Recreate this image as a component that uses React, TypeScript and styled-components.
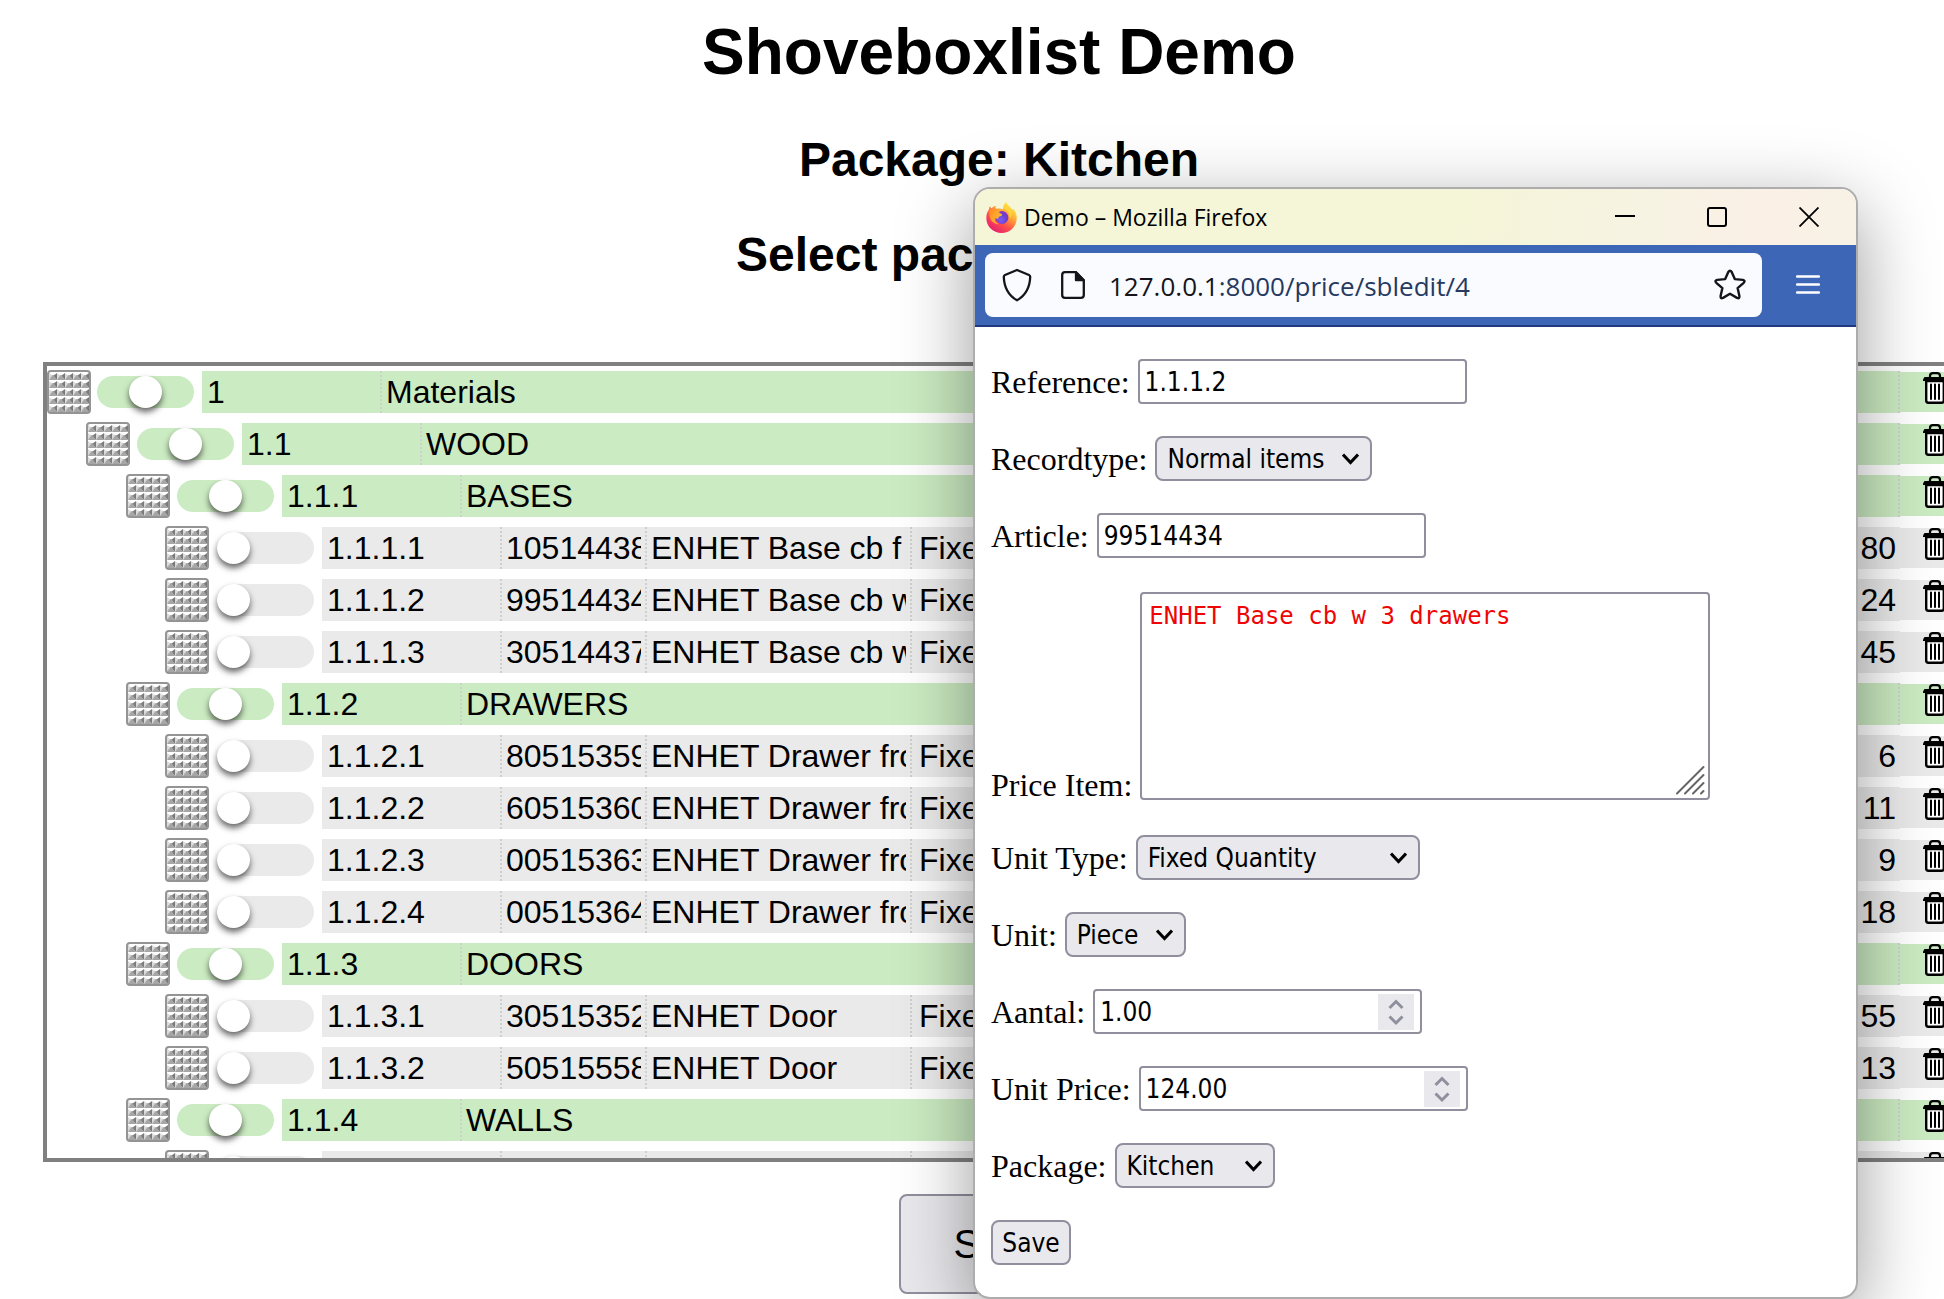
import React, { useId } from "react";
import styled, { createGlobalStyle } from "styled-components";

const sans = `"Liberation Sans", Arial, sans-serif`;
const serif = `"Liberation Serif", "Times New Roman", serif`;
const control = `"DejaVu Sans Condensed", Tahoma, sans-serif`;
const chrome = `"Open Sans", "Segoe UI", sans-serif`;

const GlobalStyle = createGlobalStyle`
  *, *::before, *::after { box-sizing: border-box; }
  body { margin: 0; background: #fff; color: #000; }
`;

/* ---------- page ---------- */

const Page = styled.div`
  position: relative;
  min-height: 100vh;
  overflow: hidden;
  font-family: ${sans};
`;

const Main = styled.main`
  display: flex;
  flex-direction: column;
  align-items: center;
  margin: 0 -11px 0 43px;
  padding-top: 15px;
`;

const Title = styled.h1`
  margin: 0 0 43px;
  font-size: 64px;
  line-height: 74px;
`;

const Heading = styled.h2`
  display: flex;
  align-items: center;
  gap: 13px;
  margin: 0 0 39px;
  font-size: 48px;
  line-height: 56px;
`;

const PackageSelect = styled.select`
  width: 150px;
  height: 44px;
  border: 2px solid #8f8f9d;
  border-radius: 8px;
  background: #e9e9ed;
  font: 26px ${control};
`;

const Frame = styled.ul`
  align-self: stretch;
  display: flex;
  flex-direction: column;
  gap: 8px;
  height: 800px;
  margin: 40px 0 32px;
  padding: 4px 0 0;
  border: 4px solid #808080;
  overflow: hidden;
  list-style: none;
`;

const PageButton = styled.button`
  width: 200px;
  height: 100px;
  border: 2px solid #8f8f9d;
  border-radius: 8px;
  background: #e9e9ed;
  color: #000;
  font: 40px ${sans};
`;

/* ---------- list rows ---------- */

const GREEN = "#cbebc2";
const GREY = "#eaeaea";

const RowItem = styled.li`
  flex: none;
  display: flex;
  align-items: center;
  height: 44px;
`;

const HandleSlot = styled.div<{ $level: number }>`
  flex: none;
  width: ${(p) => 50 + p.$level * 40}px;
  padding-left: ${(p) => Math.floor(p.$level * 39.5)}px;
  height: 44px;
`;

const Slider = styled.input<{ $group: boolean }>`
  appearance: none;
  flex: none;
  width: 97px;
  height: 32px;
  margin: 0 8px 0 0;
  border-radius: 16px;
  background: ${(p) => (p.$group ? GREEN : GREY)};
  &::-webkit-slider-thumb {
    appearance: none;
    width: 33px;
    height: 32px;
    border-radius: 50%;
    background: #fff;
    box-shadow: 0 4px 6px rgba(0, 0, 0, 0.6);
  }
`;

const Bar = styled.div<{ $group: boolean }>`
  flex: 1;
  min-width: 0;
  display: flex;
  height: 42px;
  background: ${(p) => (p.$group ? GREEN : GREY)};
  font-size: 32px;
  line-height: 42px;
`;

const Cell = styled.div<{ $width?: number; $inset?: number; $right?: boolean; $plain?: boolean }>`
  flex: ${(p) => (p.$width ? `0 0 ${p.$width}px` : "1 1 0")};
  min-width: 0;
  padding: 0 4px 0 ${(p) => p.$inset ?? 4}px;
  border-right: ${(p) => (p.$plain ? "0" : "2px dotted #cdd0cd")};
  text-align: ${(p) => (p.$right ? "right" : "left")};
`;

const Clip = styled.span`
  display: block;
  overflow: hidden;
  white-space: nowrap;
`;

const DeleteCell = styled.div<{ $group: boolean }>`
  flex: none;
  display: flex;
  width: 51px;
  height: 40px;
  padding-left: 23px;
  background: ${(p) => (p.$group ? GREEN : GREY)};
`;

const IconButton = styled.button`
  display: flex;
  align-items: center;
  justify-content: center;
  margin: 0;
  padding: 0;
  border: 0;
  background: none;
  color: inherit;
`;

const DeleteButton = styled(IconButton)`
  align-self: flex-start;
`;

/* ---------- popup window ---------- */

const Popup = styled.section`
  position: absolute;
  top: 187px;
  right: 86px;
  width: 885px;
  border: 2px solid #adadad;
  border-radius: 17px;
  background: #fff;
  background-clip: padding-box;
  box-shadow: 0 22px 76px rgba(0, 0, 0, 0.4);
  overflow: hidden;
`;

const TitleBar = styled.header`
  display: flex;
  align-items: center;
  gap: 7px;
  height: 56px;
  padding: 0 37px 0 11px;
  background: linear-gradient(100deg, #f5f5d8 0%, #f5f5d8 55%, #f6f3e2 75%, #fbf0e6 90%, #f7f2e6 100%);
  font: 23px ${chrome};
`;

const TitleText = styled.span`
  flex: 1;
`;

const WindowButtons = styled.div`
  display: flex;
  gap: 72px;
`;

const ToolBar = styled.div`
  display: flex;
  align-items: center;
  height: 82px;
  padding: 0 36px 0 10px;
  border-bottom: 2px solid #1d3b7c;
  background: #3e66b6;
  color: #fff;
`;

const UrlField = styled.div`
  flex: 1;
  display: flex;
  align-items: center;
  height: 64px;
  margin-right: 34px;
  padding: 0 15px 0 16px;
  border-radius: 8px;
  background: #f9fbff;
  color: #15141a;
`;

const UrlText = styled.div`
  flex: 1;
  padding: 2px 0 0 24px;
  color: #26395f;
  font: 26px ${chrome};
`;

const Host = styled.span`
  color: #15141a;
`;

const DocSlot = styled(IconButton)`
  margin-left: 28px;
`;

const Form = styled.form`
  display: flex;
  flex-direction: column;
  gap: 32px;
  padding: 32px 16px;
  font: 32px/36px ${serif};
`;

const Field = styled.div<{ $tall?: boolean }>`
  display: flex;
  align-items: ${(p) => (p.$tall ? "flex-end" : "center")};
  gap: 8px;
`;

const TextBox = styled.input`
  width: 329px;
  height: 45px;
  padding: 0 4px 0 5px;
  border: 2px solid #8f8f9d;
  border-radius: 4px;
  background: #fff;
  color: #000;
  font: 26px ${control};
  &::-webkit-inner-spin-button { appearance: none; margin: 0; }
`;

const Stack = styled.div`
  display: grid;
  align-items: center;
  & > * { grid-area: 1 / 1; }
`;

const DropDown = styled.select<{ $width: number }>`
  appearance: none;
  width: ${(p) => p.$width}px;
  height: 45px;
  padding: 0 10px;
  border: 2px solid #8f8f9d;
  border-radius: 8px;
  background: #e9e9ed;
  color: #000;
  font: 26px ${control};
`;

const Chevron = styled.svg`
  justify-self: end;
  margin-right: 13px;
  pointer-events: none;
`;

const Spinner = styled.svg`
  justify-self: end;
  margin-right: 8px;
  background: #e9e9ed;
  pointer-events: none;
`;

const TextArea = styled.textarea`
  display: block;
  width: 570px;
  height: 208px;
  padding: 8px 7px;
  border: 2px solid #8f8f9d;
  border-radius: 4px;
  background: #fff;
  color: #ee0505;
  font: 24px/28px "DejaVu Sans Mono", Consolas, monospace;
  resize: none;
`;

const AreaStack = styled(Stack)`
  margin: 2px 0 3px;
`;

const Grip = styled.svg`
  align-self: end;
  justify-self: end;
  margin: 0 5px 5px 0;
  pointer-events: none;
`;

const SaveButton = styled.button`
  align-self: flex-start;
  width: 80px;
  height: 45px;
  padding: 0;
  border: 2px solid #8f8f9d;
  border-radius: 8px;
  background: #e9e9ed;
  color: #000;
  font: 26px ${control};
`;

/* ---------- drawings ---------- */

const HandleIcon = () => {
  const id = useId();
  return (
    <svg width="44" height="44" viewBox="0 0 44 44" display="block">
      <defs>
        <pattern id={id} x="2" y="2" width="8" height="8" patternUnits="userSpaceOnUse">
          <path d="M0 0h8v8H0z" fill="#fff" />
          <path d="M0 1v7l4-4z" fill="#dadada" />
          <path d="M8 1v7L4 4z" fill="#7a7a7a" />
          <path d="M0 8h8L4.500 3h-1z" fill="#a6a6a6" />
        </pattern>
      </defs>
      <rect x="1" y="1" width="42" height="42" rx="3" fill={`url(#${id})`} stroke="#949494" strokeWidth="2" />
    </svg>
  );
};

const TrashIcon = () => (
  <svg width="24" height="32" viewBox="0 0 24 32" fill="none" stroke="#000">
    <path d="M7 6V4q0-2.800 2.800-2.800h4.400Q17 1.200 17 4v2" strokeWidth="2.200" />
    <path d="M1.500 5h21l1.500 2.500V9H0V7.500z" fill="#000" stroke="none" />
    <path d="M3.200 9v19.500q0 2.200 2.200 2.200h13.200q2.200 0 2.200-2.200V9z" fill="#fff" strokeWidth="2.400" />
    <path d="M8 12.500v14.500M12 12.500v14.500M16 12.500v14.500" strokeWidth="2" strokeLinecap="round" />
  </svg>
);

const FirefoxLogo = () => (
  <svg width="31" height="31" viewBox="0 0 31 31">
    <defs>
      <linearGradient id="ffBody" x1="0.850" y1="0.100" x2="0.250" y2="0.950">
        <stop offset="0" stopColor="#fff044" />
        <stop offset="0.350" stopColor="#ffa436" />
        <stop offset="0.650" stopColor="#ff4f4a" />
        <stop offset="1" stopColor="#e5206f" />
      </linearGradient>
      <radialGradient id="ffGlobe" cx="0.400" cy="0.700" r="0.800">
        <stop offset="0" stopColor="#7d5bf5" />
        <stop offset="0.600" stopColor="#6a3fc9" />
        <stop offset="1" stopColor="#a42bc0" />
      </radialGradient>
      <linearGradient id="ffFox" x1="0" y1="0" x2="1" y2="0.600">
        <stop offset="0" stopColor="#ff8a1f" />
        <stop offset="1" stopColor="#ffbd3a" />
      </linearGradient>
    </defs>
    <path
      d="M20 0c1 3 4.500 4.600 6 7.300.6.300 1.300-.3 1.500-.2C29.700 10 31 13 30.700 17 30.200 25 23.800 31 15.600 31 7.200 31 .6 24.600.3 16.500.2 12.800 1.400 9.500 3 7.200c0-1.200.3-2.200.9-2.900.4 1 .9 1.600 1.600 2C7 4.600 8.700 4 10 4c-.6 1-.5 2.200-.1 2.800 2-.5 5.200-.6 7.200.4C17 4.500 18.200 1.500 20 0z"
      fill="url(#ffBody)"
    />
    <circle cx="16" cy="15.500" r="6.400" fill="url(#ffGlobe)" />
    <path
      d="M3 8.500C4.800 7 7.500 7.300 9.500 8.200c2-.7 4.200-.3 5.600.6-1.300.4-2 1.100-2 1.900 1.400 1 3.200 1.200 3 2.200-.3 1.200-2.300 1-3.200 1.900-.6.600-.1 1.800-1.100 2-1.200.3-2-.8-2.900-.6-.4 2.600 1.300 5.200 4 6-5-.1-8.600-3.500-9.200-7.700C3.400 12.300 2.800 10.400 3 8.500z"
      fill="url(#ffFox)"
    />
    <path d="M18 6.500c4 1.600 6.500 5.500 5.500 10.500 2-2.500 2.300-5.500 1.500-8.500C23.500 6 20.500 4.600 20 2c-1.600 1.300-2 3-2 4.500z" fill="#ffd43e" />
  </svg>
);

const DropArrow = () => (
  <Chevron width="17" height="12" viewBox="0 0 17 12" fill="none" stroke="#000" strokeWidth="3">
    <path d="M1 1.500l7.500 8 7.500-8" />
  </Chevron>
);

const SpinArrows = () => (
  <Spinner width="36" height="36" viewBox="0 0 36 36" fill="none" stroke="#8f8f9d" strokeWidth="3">
    <path d="M11.500 14L18 7.500l6.500 6.500M11.500 22.500L18 29l6.500-6.500" />
  </Spinner>
);

/* ---------- data ---------- */

type Row = { level: number; no: string; title: string; article?: string; amount?: string };

const rows: Row[] = [
  { level: 0, no: "1", title: "Materials" },
  { level: 1, no: "1.1", title: "WOOD" },
  { level: 2, no: "1.1.1", title: "BASES" },
  { level: 3, no: "1.1.1.1", title: "ENHET Base cb f oven", article: "10514438", amount: "80" },
  { level: 3, no: "1.1.1.2", title: "ENHET Base cb w 3 drawers", article: "99514434", amount: "24" },
  { level: 3, no: "1.1.1.3", title: "ENHET Base cb w shelf", article: "30514437", amount: "45" },
  { level: 2, no: "1.1.2", title: "DRAWERS" },
  { level: 3, no: "1.1.2.1", title: "ENHET Drawer front", article: "80515359", amount: "6" },
  { level: 3, no: "1.1.2.2", title: "ENHET Drawer front", article: "60515360", amount: "11" },
  { level: 3, no: "1.1.2.3", title: "ENHET Drawer front", article: "00515363", amount: "9" },
  { level: 3, no: "1.1.2.4", title: "ENHET Drawer front", article: "00515364", amount: "18" },
  { level: 2, no: "1.1.3", title: "DOORS" },
  { level: 3, no: "1.1.3.1", title: "ENHET Door", article: "30515352", amount: "55" },
  { level: 3, no: "1.1.3.2", title: "ENHET Door", article: "50515558", amount: "13" },
  { level: 2, no: "1.1.4", title: "WALLS" },
  { level: 3, no: "1.1.4.1", title: "ENHET Wall cb", article: "", amount: "" },
];

const ListRow = ({ row }: { row: Row }) => {
  const group = row.article === undefined;
  return (
    <RowItem>
      <HandleSlot $level={row.level}>
        <HandleIcon />
      </HandleSlot>
      <Slider
        type="range"
        min={0}
        max={2}
        defaultValue={group ? 1 : 0}
        $group={group}
        aria-label={`Move ${row.no}`}
      />
      <Bar $group={group}>
        <Cell $width={180} $inset={5}>
          {row.no}
        </Cell>
        {group ? (
          <Cell>{row.title}</Cell>
        ) : (
          <>
            <Cell $width={145}>
              <Clip>{row.article}</Clip>
            </Cell>
            <Cell $width={265}>
              <Clip>{row.title}</Clip>
            </Cell>
            <Cell $width={240} $inset={7}>
              <Clip>Fixed Quantity</Clip>
            </Cell>
            <Cell $right $plain>
              {row.amount}
            </Cell>
          </>
        )}
      </Bar>
      <DeleteCell $group={group}>
        <DeleteButton type="button" aria-label={`Delete ${row.no}`}>
          <TrashIcon />
        </DeleteButton>
      </DeleteCell>
    </RowItem>
  );
};

const SelectField = ({ label, value, width }: { label: string; value: string; width: number }) => {
  const id = useId();
  return (
    <Field>
      <label htmlFor={id}>{label}</label>
      <Stack>
        <DropDown id={id} $width={width} defaultValue={value}>
          <option>{value}</option>
        </DropDown>
        <DropArrow />
      </Stack>
    </Field>
  );
};

const InputField = ({ label, value, numeric }: { label: string; value: string; numeric?: boolean }) => {
  const id = useId();
  return (
    <Field>
      <label htmlFor={id}>{label}</label>
      <Stack>
        <TextBox id={id} type={numeric ? "number" : "text"} step={numeric ? "0.01" : undefined} defaultValue={value} />
        {numeric && <SpinArrows />}
      </Stack>
    </Field>
  );
};

const EditWindow = () => (
  <Popup aria-label="Demo">
    <TitleBar>
      <FirefoxLogo />
      <TitleText>Demo – Mozilla Firefox</TitleText>
      <WindowButtons>
        <IconButton type="button" aria-label="Minimize">
          <svg width="20" height="20" viewBox="0 0 20 20" stroke="#000" strokeWidth="2">
            <path d="M0 9h20" />
          </svg>
        </IconButton>
        <IconButton type="button" aria-label="Maximize">
          <svg width="20" height="20" viewBox="0 0 20 20" fill="none" stroke="#000" strokeWidth="2">
            <rect x="1" y="1" width="18" height="18" rx="2" />
          </svg>
        </IconButton>
        <IconButton type="button" aria-label="Close">
          <svg width="20" height="20" viewBox="0 0 20 20" stroke="#000" strokeWidth="1.800">
            <path d="M.5.500l19 19M19.500.500l-19 19" />
          </svg>
        </IconButton>
      </WindowButtons>
    </TitleBar>
    <ToolBar>
      <UrlField>
        <IconButton type="button" aria-label="Tracking protection">
          <svg width="32" height="34" viewBox="0 0 32 34" fill="none" stroke="#15141a" strokeWidth="2.300" strokeLinejoin="round">
            <path d="M16 2l12 5q1.300.6 1.200 2C28.800 20 24.500 27.500 16 32.300 7.500 27.500 3.200 20 2.800 9q-.1-1.400 1.200-2z" />
          </svg>
        </IconButton>
        <DocSlot type="button" aria-label="Site information">
          <svg width="24" height="28" viewBox="0 0 24 28" fill="none" stroke="#15141a" strokeWidth="2.300" strokeLinejoin="round">
            <path d="M4 1.200h11l7.800 8V24q0 2.800-2.800 2.800H4q-2.800 0-2.800-2.800V4q0-2.800 2.800-2.800z" />
            <path d="M15 1.200v8h7.800z" fill="#15141a" />
          </svg>
        </DocSlot>
        <UrlText role="textbox" aria-label="Address">
          <Host>127.0.0.1</Host>:8000/price/sbledit/4
        </UrlText>
        <IconButton type="button" aria-label="Bookmark this page">
          <svg width="34" height="32" viewBox="0 0 34 32" fill="none" stroke="#15141a" strokeWidth="2.400" strokeLinejoin="round">
            <path d="M15.300 3q1.700-2.600 3.400 0l3.100 7.100 8 .8q3 .6.900 2.900l-6.100 5.300 1.800 8q.3 2.900-2.400 1.800l-7-4.200-7 4.200q-2.700 1.100-2.400-1.800l1.800-8-6.100-5.300q-2.100-2.300.9-2.900l8-.8z" />
          </svg>
        </IconButton>
      </UrlField>
      <IconButton type="button" aria-label="Menu">
        <svg width="24" height="20" viewBox="0 0 24 20" fill="none" stroke="#fff" strokeWidth="2.400" strokeLinecap="round">
          <path d="M1 1.500h22M1 9.500h22M1 17.500h22" />
        </svg>
      </IconButton>
    </ToolBar>
    <Form onSubmit={(e) => e.preventDefault()}>
      <InputField label="Reference:" value="1.1.1.2" />
      <SelectField label="Recordtype:" value="Normal items" width={217} />
      <InputField label="Article:" value="99514434" />
      <Field $tall>
        <label htmlFor="price-item">Price Item:</label>
        <AreaStack>
          <TextArea id="price-item" defaultValue="ENHET Base cb w 3 drawers" />
          <Grip width="30" height="30" viewBox="0 0 30 30" stroke="#666" strokeWidth="2" strokeLinecap="round">
            <path d="M2 28.500L28.500 2M10 28.500L28.500 10M18 28.500L28.500 18M26 28.500l2.500-2.500" />
          </Grip>
        </AreaStack>
      </Field>
      <SelectField label="Unit Type:" value="Fixed Quantity" width={284} />
      <SelectField label="Unit:" value="Piece" width={121} />
      <InputField label="Aantal:" value="1.00" numeric />
      <InputField label="Unit Price:" value="124.00" numeric />
      <SelectField label="Package:" value="Kitchen" width={160} />
      <SaveButton type="submit">Save</SaveButton>
    </Form>
  </Popup>
);

export default function App() {
  return (
    <Page>
      <GlobalStyle />
      <Main>
        <Title>Shoveboxlist Demo</Title>
        <Heading>Package: Kitchen</Heading>
        <Heading>
          <label htmlFor="package">Select package:</label>
          <PackageSelect id="package" defaultValue="Kitchen">
            <option>Kitchen</option>
          </PackageSelect>
        </Heading>
        <Frame>
          {rows.map((row) => (
            <ListRow key={row.no} row={row} />
          ))}
        </Frame>
        <PageButton type="button">Save</PageButton>
      </Main>
      <EditWindow />
    </Page>
  );
}
